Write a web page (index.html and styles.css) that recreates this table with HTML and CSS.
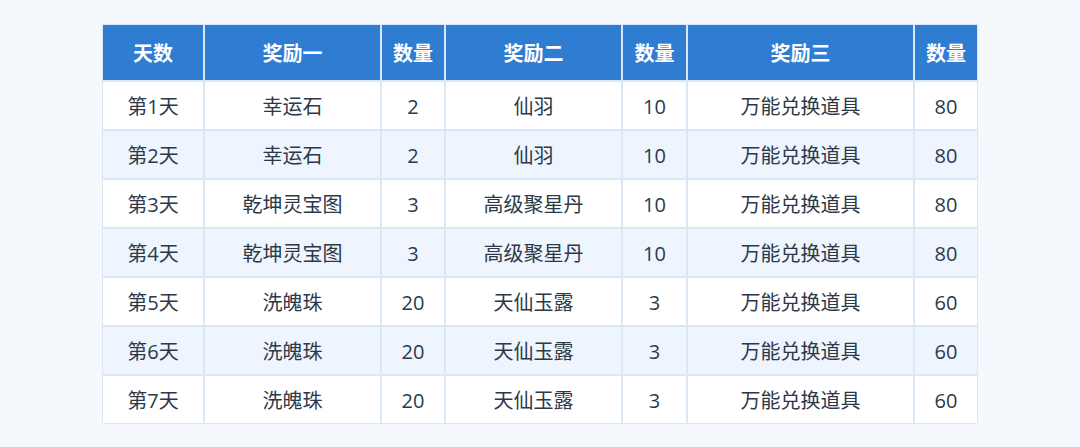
FILE: index.html
```html
<!DOCTYPE html>
<html lang="zh-CN">
<head>
<meta charset="utf-8">
<link rel="stylesheet" href="styles.css">
</head>
<body>
<div class="page">
  <div class="table">
    <div class="cell head">天数</div>
    <div class="cell head">奖励一</div>
    <div class="cell head">数量</div>
    <div class="cell head">奖励二</div>
    <div class="cell head">数量</div>
    <div class="cell head">奖励三</div>
    <div class="cell head">数量</div>

    <div class="cell">第1天</div><div class="cell">幸运石</div><div class="cell">2</div><div class="cell">仙羽</div><div class="cell">10</div><div class="cell">万能兑换道具</div><div class="cell">80</div>
    <div class="cell alt">第2天</div><div class="cell alt">幸运石</div><div class="cell alt">2</div><div class="cell alt">仙羽</div><div class="cell alt">10</div><div class="cell alt">万能兑换道具</div><div class="cell alt">80</div>
    <div class="cell">第3天</div><div class="cell">乾坤灵宝图</div><div class="cell">3</div><div class="cell">高级聚星丹</div><div class="cell">10</div><div class="cell">万能兑换道具</div><div class="cell">80</div>
    <div class="cell alt">第4天</div><div class="cell alt">乾坤灵宝图</div><div class="cell alt">3</div><div class="cell alt">高级聚星丹</div><div class="cell alt">10</div><div class="cell alt">万能兑换道具</div><div class="cell alt">80</div>
    <div class="cell">第5天</div><div class="cell">洗魄珠</div><div class="cell">20</div><div class="cell">天仙玉露</div><div class="cell">3</div><div class="cell">万能兑换道具</div><div class="cell">60</div>
    <div class="cell alt">第6天</div><div class="cell alt">洗魄珠</div><div class="cell alt">20</div><div class="cell alt">天仙玉露</div><div class="cell alt">3</div><div class="cell alt">万能兑换道具</div><div class="cell alt">60</div>
    <div class="cell">第7天</div><div class="cell">洗魄珠</div><div class="cell">20</div><div class="cell">天仙玉露</div><div class="cell">3</div><div class="cell">万能兑换道具</div><div class="cell">60</div>
  </div>
</div>
</body>
</html>
```
FILE: styles.css
```css
html, body {
  margin: 0;
  padding: 0;
  background: #f5f9fe;
}
.page {
  width: 1080px;
  height: 447px;
  padding-top: 24px;
  box-sizing: border-box;
  font-family: "Open Sans", "Noto Sans CJK SC", sans-serif;
}
.table {
  margin-left: 102px;
  width: 876px;
  box-sizing: border-box;
  display: grid;
  grid-template-columns: 100px 175px 62px 175px 63px 225px 62px;
  grid-template-rows: 55px repeat(7, 47px);
  gap: 2px;
  padding: 1px;
  background: #dae8f6;
}
.cell {
  display: flex;
  align-items: center;
  justify-content: center;
  padding-top: 3px;
  box-sizing: border-box;
  background: #ffffff;
  color: #2d3949;
  font-size: 20px;
  line-height: 1;
}
.cell.alt {
  background: #eef5fe;
}
.cell.head {
  background: #2e7dd3;
  color: #ffffff;
  font-weight: 700;
  padding-top: 2px;
}
```
